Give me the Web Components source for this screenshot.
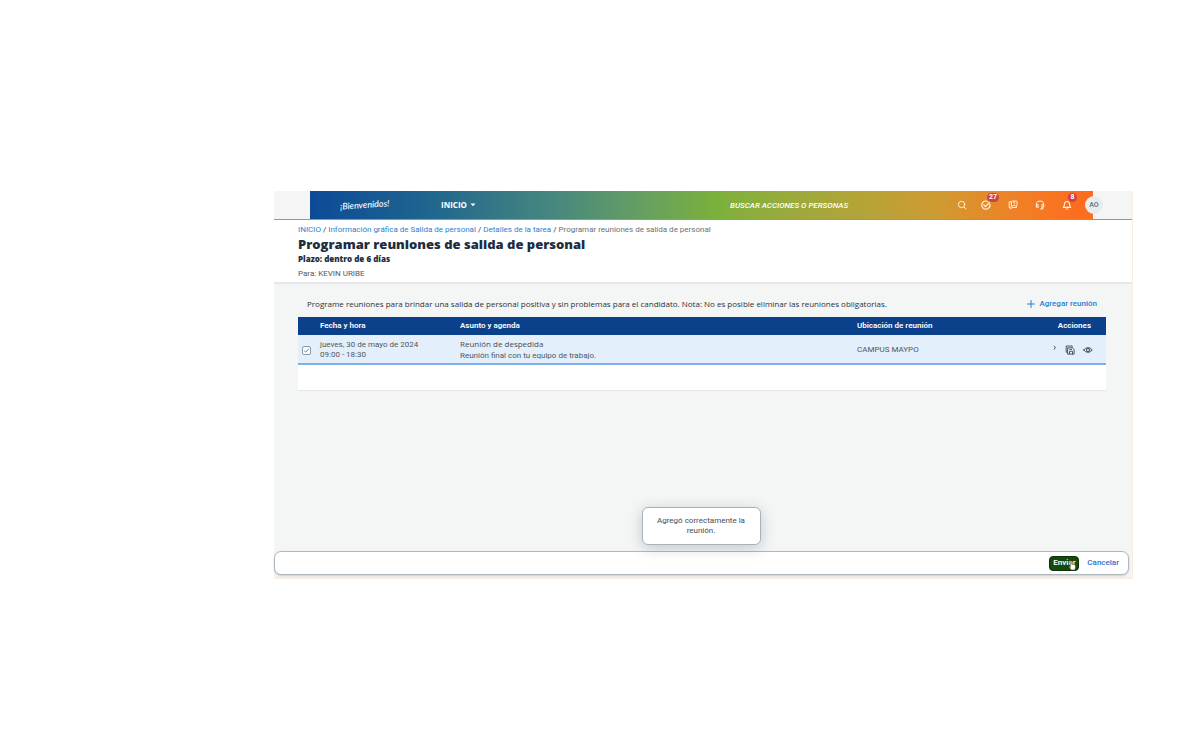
<!DOCTYPE html>
<html lang="es">
<head>
<meta charset="utf-8">
<title>Programar reuniones de salida de personal</title>
<style>
body{margin:0;background:#fff;font:8px/10px Roboto,"Liberation Sans",sans-serif;color:#50575d}
meeting-app{margin:191px 67px 40px 274px}
</style>
</head>
<body>
<meeting-app></meeting-app>
<script>
const define=(name,html)=>{
  const t=document.createElement('template');
  t.innerHTML='<style>*{box-sizing:border-box}:host{display:block;box-sizing:border-box}a{color:#2a82cf;text-decoration:none}button{font:inherit;border:0;background:none;padding:0;margin:0;cursor:pointer}svg{display:block;fill:none;stroke:currentColor;stroke-linecap:round;stroke-linejoin:round}</style>'+html;
  customElements.define(name,class extends HTMLElement{
    constructor(){super();this.attachShadow({mode:'open'}).append(t.content.cloneNode(true));}
    connectedCallback(){
      const b=this.shadowRoot.querySelector('button:not([class])');
      if(b&&this.title){b.setAttribute('aria-label',this.title);}
    }
  });
};

define('icon-button',`<style>
:host{position:relative;width:10px;height:10px}
button{display:block;width:10px;height:10px;color:inherit}
.badge{position:absolute;left:6px;top:-7px}
</style><button><slot></slot></button><span class="badge"><slot name="badge"></slot></span>`);

define('count-badge',`<style>
:host{min-width:9px;height:9px;padding:0 2px;border-radius:5px;background:#cf3f4c;color:#fff;font:700 7px/9px Roboto,sans-serif;text-align:center}
</style><slot></slot>`);

define('shell-bar',`<style>
:host{background:#f5f5f6;border-bottom:1px solid #7f9abb;padding:0 39px 0 36px}
.bar{display:flex;align-items:center;height:28px;padding-left:30px;color:#fff;background:linear-gradient(90deg,#0c4a97 0%,#1f658f 15%,#47877f 31%,#67a05f 43%,#7bb13b 52%,#a5a83a 65%,#d09b31 80%,#ef8126 90%,#fd6d1f 98%)}
.logo{width:101px;font:italic 500 9px/12px Lato,sans-serif;color:#fff}
.logo span{display:inline-block;transform:rotate(-4deg)}
.menu{display:flex;align-items:center;gap:3px;color:#fff;font-family:"Open Sans",sans-serif;font-weight:700}
.search{display:flex;flex:1;align-items:center;justify-content:flex-end;gap:7px;padding-right:14px;color:#fff1dc}
input{width:225px;height:20px;border:1px solid #a8a25088;border-radius:10px;background:none;padding:0 4px;font:italic 500 8px/10px Roboto,sans-serif;color:#fff;outline:0}
input::placeholder{color:#fff;opacity:1}
.tools{display:flex;gap:17px;align-items:center;color:#fff1dc;margin-right:-10px}
.avatar{width:18px;height:18px;border-radius:9px;background:#e8ecef;color:#596a78;text-align:center;font:500 7px/18px Roboto,sans-serif;margin-left:-4px}
</style>
<div class="bar">
<div class="logo"><span>¡Bienvenidos!</span></div>
<button class="menu">INICIO <svg width="6" height="4" viewBox="0 0 6 4"><path d="M.5.5h5L3 3.3z" fill="#fff" stroke="none"/></svg></button>
<div class="search"><input type="search" aria-label="Buscar" placeholder="BUSCAR ACCIONES O PERSONAS">
<icon-button title="Buscar"><svg width="10" height="10" viewBox="0 0 10 10"><circle cx="4.6" cy="4.5" r="3.2"/><path d="M7 7l2 2"/></svg></icon-button></div>
<div class="tools">
<icon-button title="Tareas"><svg width="10" height="10" viewBox="0 0 10 10" stroke-width="1.2"><path d="M8.9 4.2A4.1 4.1 0 1 1 6.4 1.3M2.9 5l1.6 1.6L8.7 2"/></svg><count-badge slot="badge">27</count-badge></icon-button>
<icon-button title="Ayuda"><svg width="10" height="10" viewBox="0 0 10 10"><path d="M3 1.8H1.2v5.6h1.2v1.5L4.2 7.5h4.3V6.5M5.2 5.7 3.4 6.5V2q0-1 1-1h3.7q1 0 1 1v2.7q0 1-1 1zM5.2 2.8c.2-.8 1.9-.8 1.9 0 0 .6-.9.6-.9 1.2"/></svg></icon-button>
<icon-button title="Soporte"><svg width="10" height="10" viewBox="0 0 10 10" stroke-width="1.1"><path d="M1.3 5.5V4.7a3.7 3.7 0 0 1 7.4 0v.8M1.3 4.8h1.8v2.5H2q-.7-.2-.7-1zM8.7 4.8H6.9v2.5H8q.7-.2.7-1zM8.3 7.5Q7.8 9 5.7 9"/></svg></icon-button>
<icon-button title="Notificaciones"><svg width="10" height="10" viewBox="0 0 10 10" stroke-width="1.1"><path d="M1.3 7.4Q2.5 6.3 2.5 4a2.5 2.5 0 0 1 5 0q0 2.3 1.2 3.4zM4.2 9h1.6"/></svg><count-badge slot="badge">8</count-badge></icon-button>
<div class="avatar">AO</div>
</div></div>`);

define('page-heading',`<style>
:host{background:#fff;border-bottom:2px solid #e6e7e8;padding:5px 24px 3px}
nav{color:#6a7075}
i{font-style:normal;color:#333;padding:0 2px}
h1{margin:1px 0 2px;font:800 13px/16px "Open Sans",sans-serif;color:#1d2d3e}
strong{display:block;font-family:"Open Sans",sans-serif;font-weight:800;color:#1d2d3e;margin-bottom:5px}
</style>
<nav aria-label="Ruta"><a href="#">INICIO</a><i>/</i><a href="#">Información gráfica de Salida de personal</a><i>/</i><a href="#">Detalles de la tarea</a><i>/</i><span>Programar reuniones de salida de personal</span></nav>
<h1>Programar reuniones de salida de personal</h1>
<strong>Plazo: dentro de 6 días</strong>
<div>Para: KEVIN URIBE</div>`);

define('meeting-table',`<style>
:host{padding:14px 26px 0 24px}
.top{display:flex;justify-content:space-between;align-items:center;height:12px;padding:0 9px;margin-bottom:7px;font-weight:600;color:#2b333b}
.top span{font-family:"Open Sans",sans-serif;font-weight:500}
.top button{display:flex;align-items:center;gap:4px;color:#2780d0;font-weight:500}
table{width:100%;table-layout:fixed;border-collapse:collapse;background:#fff}
th{height:18px;padding:0;background:#0b418b;color:#fff;font-weight:600;text-align:left}
td{height:29px;padding:2px 0 0;background:#e3effb;border-bottom:2px solid #7fb1e6;vertical-align:middle}
.c{width:22px;padding-left:4px}.d{width:140px}.u{width:150px}.a{width:99px}
th.a{text-align:right;padding-right:15px}
.rest{height:26px;background:#fff;border-bottom:1px solid #e5e6e7}
input{appearance:none;display:block;width:9px;height:9px;margin:0;border:1px solid #8b98a6;border-radius:2px;background:#fff url("data:image/svg+xml,%3Csvg xmlns='http://www.w3.org/2000/svg' viewBox='0 0 7 7'%3E%3Cpath d='M1.3 3.7l1.5 1.5 3-3.5' fill='none' stroke='%233b8ddd'/%3E%3C/svg%3E")}
b{display:block;font-family:"Open Sans",sans-serif;font-weight:500;margin-bottom:2px;color:#434d57}
.acts{display:flex;justify-content:flex-end;gap:8px;padding-right:13px;align-items:center;color:#4c5a67}
</style>
<div class="top"><span>Programe reuniones para brindar una salida de personal positiva y sin problemas para el candidato. Nota: No es posible eliminar las reuniones obligatorias.</span>
<button class="add"><svg width="8" height="8" viewBox="0 0 8 8"><path d="M4 .5v7M.5 4h7"/></svg>Agregar reunión</button></div>
<table><thead><tr><th class="c"></th><th class="d">Fecha y hora</th><th>Asunto y agenda</th><th class="u">Ubicación de reunión</th><th class="a">Acciones</th></tr></thead>
<tbody><tr><td class="c"><input type="checkbox" checked aria-label="Seleccionar Reunión de despedida"></td><td>jueves, 30 de mayo de 2024<br>09:00 - 18:30</td><td><b>Reunión de despedida</b>Reunión final con tu equipo de trabajo.</td><td>CAMPUS MAYPO</td>
<td><div class="acts"><svg width="4" height="10" viewBox="0 0 4 10"><path d="M1.2 1.2l1.2 1-1 2"/></svg>
<icon-button title="Copiar"><svg width="10" height="10" viewBox="0 0 10 10"><path d="M2.3 7.2H1.2V1h6v1.2M3 2.8h4.5l1.6 1.6v4.7H3zM4.5 9V6.3h3V9M4.6 4.4h2"/></svg></icon-button>
<icon-button title="Ver"><svg width="10" height="10" viewBox="0 0 10 10"><path d="M.7 5Q5 0 9.3 5 5 10 .7 5z"/><circle cx="5" cy="5" r="1.7"/><path d="M5 5v.1"/></svg></icon-button></div></td></tr></tbody></table>
<div class="rest"></div>`);

define('toast-message',`<style>
:host{width:119px;padding:8px 12px;border:1px solid #a9b2ba;border-radius:6px;background:#fff;text-align:center;color:#444d55;box-shadow:0 3px 14px #5a6e7d55}
</style><div role="status"><slot></slot></div>`);

define('action-footer',`<style>
:host{margin:0 3px 2px 0;display:flex;align-items:center;justify-content:flex-end;gap:8px;height:24px;padding:0 9px;border:1px solid #b0b7bd;border-radius:7px;background:#fff;box-shadow:0 1px 2px #8a949c66}
.send{position:relative;width:30px;height:15px;border-radius:4px;background:#154a0c;color:#fff;font-weight:600;border:1px solid #0c3305;text-align:left;padding-left:3px}
.send svg{position:absolute;left:18px;top:3px}
.cancel{color:#1f75cb;font-weight:500}
</style>
<button class="send">Enviar<svg width="9" height="11" viewBox="0 0 9 11"><path d="M2.3 6V1.3q.7-.9 1.4 0v3q2.1-.1 3.8 1v2.3L6.8 10H3.2L1 6.7q0-1 1.3.4z" fill="#fff" stroke="#333" stroke-width=".5"/></svg></button>
<button class="cancel">Cancelar</button>`);

define('meeting-app',`<style>
:host{background:#f4f5f5;border-right:1px solid #f5eedf;border-bottom:2px solid #faeedd}
main{position:relative;min-height:267px}
toast-message{position:absolute;left:0;right:4px;bottom:6px;margin:auto}
</style>
<shell-bar></shell-bar><page-heading></page-heading>
<main><meeting-table></meeting-table><toast-message>Agregó correctamente la reunión.</toast-message></main>
<action-footer></action-footer>`);
</script>
</body>
</html>
